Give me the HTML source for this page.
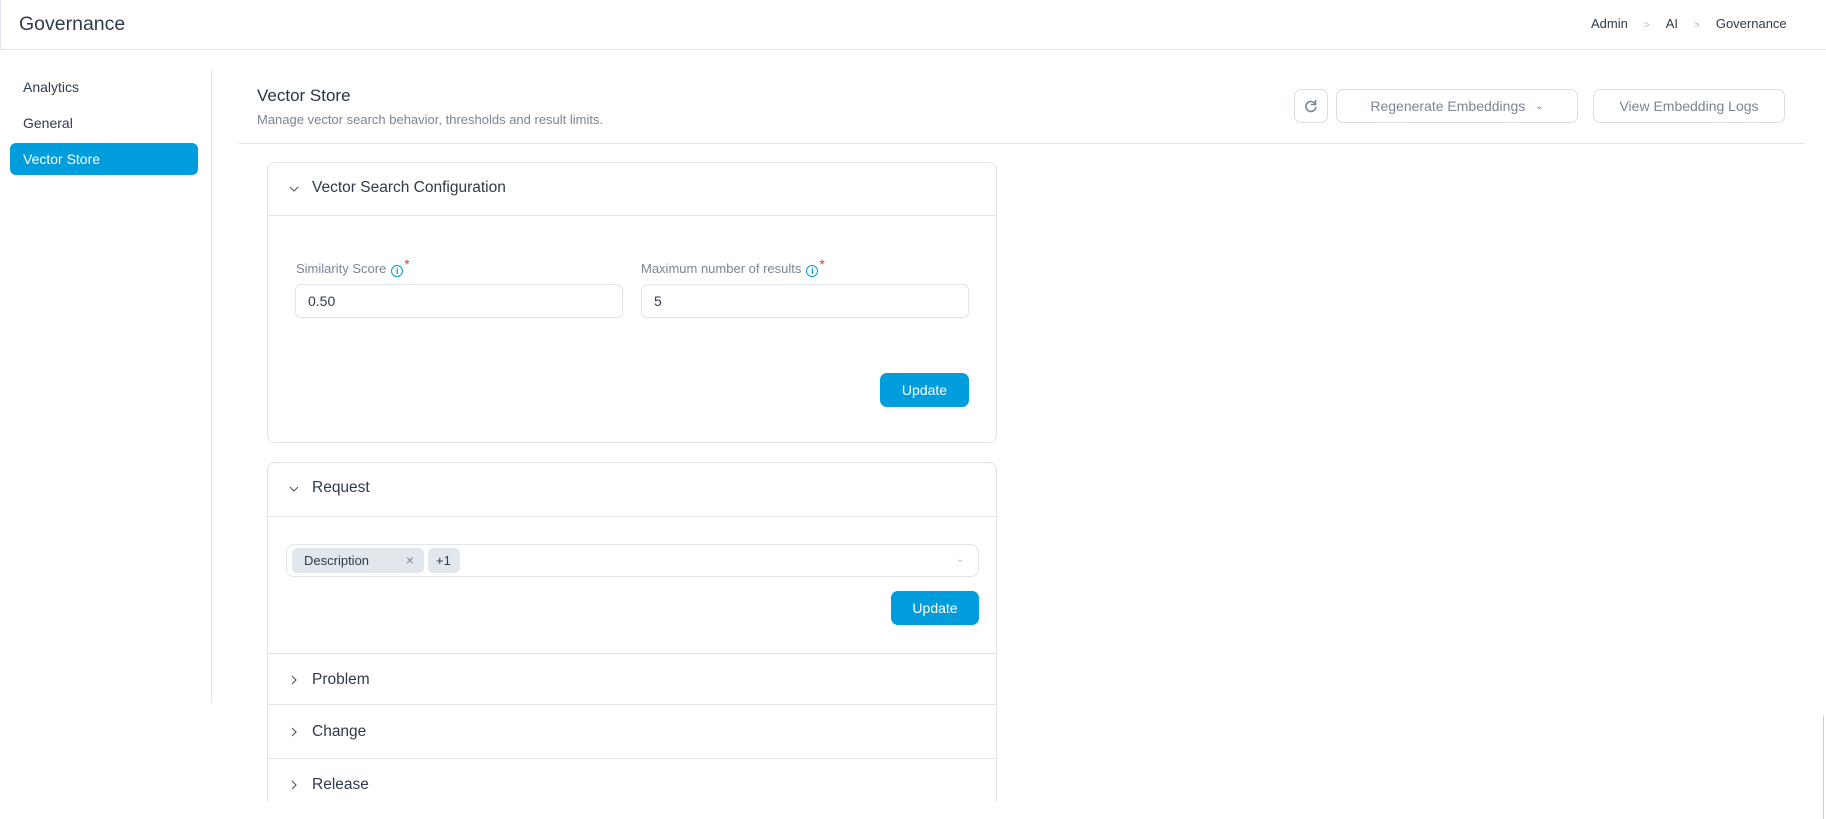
<!DOCTYPE html>
<html style="overflow:hidden;height:819px"><head><meta charset="utf-8"><style>
*{box-sizing:border-box;margin:0;padding:0}
body{width:1826px;height:819px;overflow:hidden;background:#fff;font-family:"Liberation Sans",sans-serif;color:#2f3a4a;position:relative}
.a{position:absolute}
.hdr{left:0;top:0;width:1826px;height:50px;border-bottom:1px solid #dfe4ec;border-left:1px solid #dfe4ec}
.btn{border:1px solid #d9dfe8;border-radius:7px;color:#7b8595;font-size:14px;display:flex;align-items:center;justify-content:center;background:#fff}
.card{border:1px solid #dfe4ec;border-radius:8px;background:#fff}
.sec{left:0;right:0;border-top:1px solid #dfe4ec;font-size:15.5px;display:flex;align-items:center;padding-left:44px}
.ch{position:absolute;left:20px;top:50%;margin-top:-6px}
.inp{border:1px solid #dfe4ec;border-radius:6px;font-size:14px;display:flex;align-items:center;padding-left:12px;color:#2f3a4a}
.upd{background:#009ddc;color:#fff;border-radius:7px;font-size:14px;display:flex;align-items:center;justify-content:center}
.lbl{font-size:13px;color:#7b8595}
.info{display:inline-block;width:12px;height:12px;border:1.3px solid #009ddc;border-radius:50%;color:#009ddc;font-size:9px;line-height:10px;text-align:center;font-weight:bold;vertical-align:-1px;margin-left:5px}
.star{color:#e53935;font-size:14px;vertical-align:4px;margin-left:1px}
</style></head><body>
<div class="a hdr"></div>
<div class="a" style="left:19px;top:13px;font-size:19.5px;color:#2f3a4a">Governance</div>
<div class="a" style="left:1591px;top:16px;font-size:13px;color:#2f3a4a;white-space:nowrap">Admin<span style="color:#b0b8c4;margin:0 16px;font-size:10px">&gt;</span>AI<span style="color:#b0b8c4;margin:0 16px;font-size:10px">&gt;</span>Governance</div>

<div class="a" style="left:23px;top:79px;font-size:14px">Analytics</div>
<div class="a" style="left:23px;top:115px;font-size:14px">General</div>
<div class="a" style="left:10px;top:143px;width:188px;height:32px;background:#009ddc;border-radius:6px;color:#fff;font-size:14px;padding:8px 0 0 13px">Vector Store</div>
<div class="a" style="left:211px;top:70px;width:1px;height:633px;background:#dfe4ec"></div>

<div class="a" style="left:257px;top:86px;font-size:17px;color:#2a3444">Vector Store</div>
<div class="a" style="left:257px;top:112px;font-size:13px;color:#7b8595">Manage vector search behavior, thresholds and result limits.</div>
<div class="a" style="left:239px;top:143px;width:1566px;height:1px;background:#dfe4ec"></div>

<div class="a btn" style="left:1294px;top:89px;width:34px;height:34px"><svg width="16" height="16" viewBox="0 0 16 16" fill="none" stroke="#7b8595" stroke-width="1.6" stroke-linecap="round"><path d="M12.5 6.5A5 5 0 1 0 12.8 9.5"/><path d="M12.5 2.5v4h-4"/></svg></div>
<div class="a btn" style="left:1336px;top:89px;width:242px;height:34px">Regenerate Embeddings<span style="font-size:10px;margin-left:10px">&#8964;</span></div>
<div class="a btn" style="left:1593px;top:89px;width:192px;height:34px">View Embedding Logs</div>

<div class="a card" style="left:267px;top:162px;width:730px;height:281px">
 <div class="a" style="left:0;right:0;top:0;height:53px;border-bottom:1px solid #dfe4ec;font-size:15.5px;padding:16px 0 0 44px"><svg class="ch" style="top:26px" width="12" height="12" viewBox="0 0 12 12" fill="none" stroke="#4a5464" stroke-width="1.1"><path d="M2 4l4 4 4-4"/></svg>Vector Search Configuration</div>
 <div class="a lbl" style="left:28px;top:93px">Similarity Score<span class="info">i</span><span class="star">*</span></div>
 <div class="a lbl" style="left:373px;top:93px">Maximum number of results<span class="info">i</span><span class="star">*</span></div>
 <div class="a inp" style="left:27px;top:121px;width:328px;height:34px">0.50</div>
 <div class="a inp" style="left:373px;top:121px;width:328px;height:34px">5</div>
 <div class="a upd" style="left:612px;top:210px;width:89px;height:34px">Update</div>
</div>

<div class="a card" style="left:267px;top:462px;width:730px;height:341px;overflow:hidden;border-bottom:none;border-radius:8px 8px 0 0">
 <div class="a" style="left:0;right:0;top:0;height:53px;font-size:15.5px;padding:16px 0 0 44px"><svg class="ch" style="top:26px" width="12" height="12" viewBox="0 0 12 12" fill="none" stroke="#4a5464" stroke-width="1.1"><path d="M2 4l4 4 4-4"/></svg>Request</div>
 <div class="a" style="left:0;right:0;top:53px;height:1px;background:#dfe4ec"></div>
 <div class="a" style="left:18px;top:81px;width:693px;height:33px;border:1px solid #dfe4ec;border-radius:8px"></div>
 <div class="a" style="left:24px;top:85px;width:132px;height:25px;background:#e2e7ee;border-radius:5px;font-size:13px;padding:5px 0 0 12px">Description<span style="position:absolute;right:10px;top:4px;color:#7b8595;font-size:14px">×</span></div>
 <div class="a" style="left:160px;top:85px;width:32px;height:25px;background:#e2e7ee;border-radius:5px;font-size:13px;padding:5px 0 0 8px">+1</div>
 <div class="a" style="left:688px;top:91px;color:#b0b8c4;font-size:10px">&#8964;</div>
 <div class="a upd" style="left:623px;top:128px;width:88px;height:34px">Update</div>
 <div class="a sec" style="top:190px;height:52px;position:absolute"><svg class="ch" width="12" height="12" viewBox="0 0 12 12" fill="none" stroke="#4a5464" stroke-width="1.1"><path d="M4 2l4 4-4 4"/></svg>Problem</div>
 <div class="a sec" style="top:241px;height:54px;position:absolute"><svg class="ch" width="12" height="12" viewBox="0 0 12 12" fill="none" stroke="#4a5464" stroke-width="1.1"><path d="M4 2l4 4-4 4"/></svg>Change</div>
 <div class="a sec" style="top:295px;height:52px;position:absolute"><svg class="ch" width="12" height="12" viewBox="0 0 12 12" fill="none" stroke="#4a5464" stroke-width="1.1"><path d="M4 2l4 4-4 4"/></svg>Release</div>
</div>
<div class="a" style="left:1823px;top:716px;width:1px;height:103px;background:#c8ced8"></div>
</body></html>
